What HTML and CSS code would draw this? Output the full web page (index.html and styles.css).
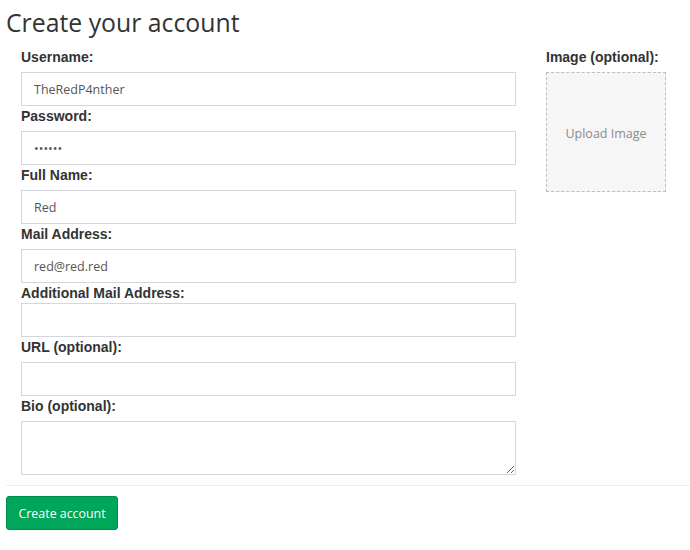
FILE: index.html
```html
<!DOCTYPE html>
<html lang="en">
<head>
<meta charset="utf-8">
<title>Create your account</title>
<link rel="stylesheet" href="styles.css">
</head>
<body>
<h1 class="title">Create your account</h1>
<form class="signup">
  <div class="columns">
    <div class="main-col">
      <div class="field">
        <label for="username">Username:</label>
        <input id="username" type="text" value="TheRedP4nther">
      </div>
      <div class="field">
        <label for="password">Password:</label>
        <input id="password" type="password" value="secret">
      </div>
      <div class="field">
        <label for="fullname">Full Name:</label>
        <input id="fullname" type="text" value="Red">
      </div>
      <div class="field">
        <label for="mail">Mail Address:</label>
        <input id="mail" type="text" value="red@red.red">
      </div>
      <div class="field field-tight">
        <label for="mail2">Additional Mail Address:</label>
        <input id="mail2" type="text">
      </div>
      <div class="field">
        <label for="url">URL (optional):</label>
        <input id="url" type="text">
      </div>
      <div class="field">
        <label for="bio">Bio (optional):</label>
        <textarea id="bio"></textarea>
      </div>
    </div>
    <div class="side-col">
      <div class="field">
        <label>Image (optional):</label>
        <div class="upload">Upload Image</div>
      </div>
    </div>
  </div>
  <hr class="divider">
  <button type="button" class="btn-create">Create account</button>
</form>
</body>
</html>
```

FILE: styles.css
```css
html, body {
  margin: 0;
  background: #fff;
}

body {
  padding: 0 0 0 6px;
  font-family: "Liberation Sans", Arial, sans-serif;
  color: #333;
}

.title {
  margin: 0;
  padding-top: 4px;
  font-family: "Open Sans", "Liberation Sans", sans-serif;
  font-size: 24.8px;
  font-weight: 400;
  line-height: 36px;
  color: #333;
}

.signup {
  margin-top: 7px;
}

.columns {
  display: grid;
  grid-template-columns: 495px 120px;
  column-gap: 30px;
  padding-left: 15px;
}

.field label {
  display: block;
  margin: 0 0 5px;
  font-size: 14px;
  font-weight: 700;
  line-height: 20px;
  color: #333;
}

.field-tight label {
  margin-bottom: 0;
}

.field input,
.field textarea {
  display: block;
  box-sizing: border-box;
  width: 100%;
  height: 34px;
  margin: 0;
  padding: 0 12px;
  border: 1px solid #d2d6de;
  border-radius: 0;
  background: #fff;
  font-family: "Open Sans", "Liberation Sans", sans-serif;
  font-size: 12.5px;
  color: #555;
  outline: none;
}

.field textarea {
  height: 54px;
  padding: 6px 12px;
  resize: vertical;
}

.upload {
  box-sizing: border-box;
  width: 120px;
  height: 120px;
  padding-top: 2px;
  display: flex;
  align-items: center;
  justify-content: center;
  border: 1px dashed #bdbdbd;
  background: #f6f6f6;
  font-family: "Open Sans", "Liberation Sans", sans-serif;
  font-size: 12.5px;
  color: #8a8a8a;
}

.divider {
  margin: 10px 0;
  border: 0;
  border-top: 1px solid #eee;
  height: 0;
}

.btn-create {
  box-sizing: border-box;
  height: 34px;
  padding: 0 11.5px;
  border: 1px solid #008d4c;
  border-radius: 3px;
  background: #00a65a;
  color: #fff;
  font-family: "Open Sans", "Liberation Sans", sans-serif;
  font-size: 12.4px;
  cursor: pointer;
}
```
